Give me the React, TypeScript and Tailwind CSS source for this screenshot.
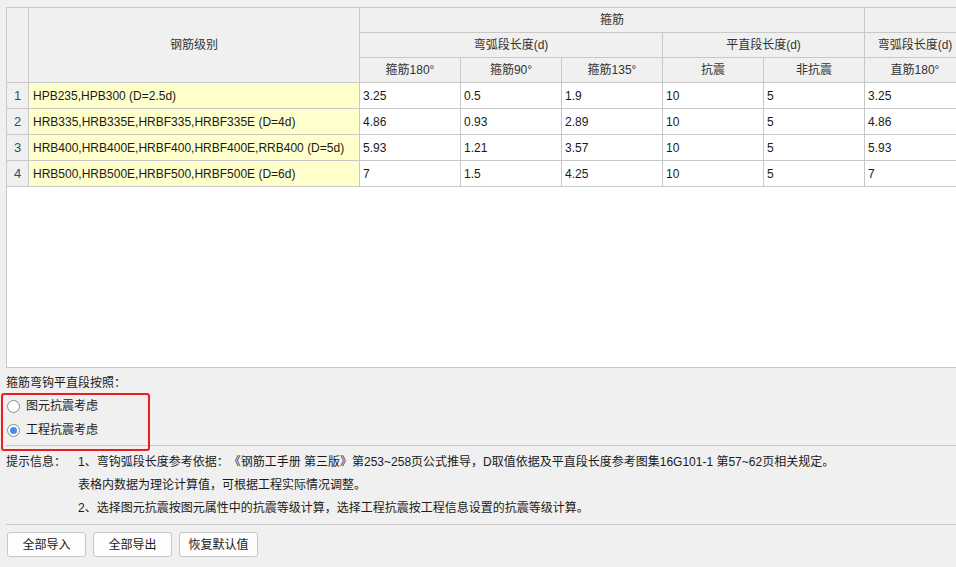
import React from "react";

const rows = [
  { n: 1, name: "HPB235,HPB300 (D=2.5d)", v: ["3.25", "0.5", "1.9", "10", "5", "3.25"] },
  { n: 2, name: "HRB335,HRB335E,HRBF335,HRBF335E (D=4d)", v: ["4.86", "0.93", "2.89", "10", "5", "4.86"] },
  { n: 3, name: "HRB400,HRB400E,HRBF400,HRBF400E,RRB400 (D=5d)", v: ["5.93", "1.21", "3.57", "10", "5", "5.93"] },
  { n: 4, name: "HRB500,HRB500E,HRBF500,HRBF500E (D=6d)", v: ["7", "1.5", "4.25", "10", "5", "7"] },
];

function H({ children, className = "" }: { children?: React.ReactNode; className?: string }) {
  return (
    <div className={"bg-[#f0f0f0] text-[#333] flex items-center justify-center whitespace-nowrap " + className}>
      {children}
    </div>
  );
}

function Radio({ checked, label }: { checked?: boolean; label: string }) {
  return (
    <div className="h-[24px] flex items-center">
      <div className="ml-[7px] w-[13px] h-[13px] rounded-full border border-[#8a8a8a] bg-white flex items-center justify-center">
        {checked && <div className="w-[7px] h-[7px] rounded-full bg-[#3f8ef0]" />}
      </div>
      <span className="ml-[6px] text-[#1a1a1a]">{label}</span>
    </div>
  );
}

export default function App() {
  return (
    <div className="relative w-[956px] h-[567px] overflow-hidden bg-[#f0f0f0] text-[12px] text-[#1a1a1a] font-['Liberation_Sans','Noto_Sans_CJK_SC',sans-serif] [text-spacing-trim:space-all]">
      <div className="pt-[7px] pl-[6px]">
        <div className="w-[1000px] h-[361px] border border-[#c8c8c8] bg-white overflow-hidden">
          <div className="w-max grid grid-cols-[21px_330px_100px_100px_100px_100px_100px_100px] grid-rows-[24px_24px_24px_25px_25px_25px_25px] gap-px bg-[#c8c8c8] border-b border-[#c8c8c8]">
            <H className="row-span-3" />
            <H className="row-span-3">钢筋级别</H>
            <H className="col-span-5">箍筋</H>
            <H />
            <H className="col-span-3">弯弧段长度(d)</H>
            <H className="col-span-2">平直段长度(d)</H>
            <H>弯弧段长度(d)</H>
            <H>箍筋180°</H>
            <H>箍筋90°</H>
            <H>箍筋135°</H>
            <H>抗震</H>
            <H>非抗震</H>
            <H>直筋180°</H>
            {rows.map((r) => (
              <React.Fragment key={r.n}>
                <div className="bg-[#f0f0f0] text-[#3b4a5a] flex items-center justify-center text-[13px]">{r.n}</div>
                <div className="bg-[#ffffcc] flex items-center pl-[4px] whitespace-nowrap">{r.name}</div>
                {r.v.map((v, i) => (
                  <div key={i} className="bg-white flex items-center pl-[3px]">
                    {v}
                  </div>
                ))}
              </React.Fragment>
            ))}
          </div>
        </div>
      </div>

      <div className="pl-[6px] mt-[7px] h-[16px] leading-[16px]">箍筋弯钩平直段按照：</div>
      <div className="mt-[3px]">
        <Radio label="图元抗震考虑" />
        <Radio checked label="工程抗震考虑" />
      </div>
      <div className="ml-[6px] mt-[3px] h-px bg-[#c8c8c8]" />

      <div className="pl-[6px] pt-[5px] flex">
        <div className="w-[72px] shrink-0 h-[23px] leading-[23px]">提示信息：</div>
        <div className="whitespace-nowrap">
          <div className="h-[23px] leading-[23px]">
            1、弯钩弧段长度参考依据：《钢筋工手册 第三版》第253~258页公式推导，D取值依据及平直段长度参考图集16G101-1 第57~62页相关规定。
          </div>
          <div className="h-[23px] leading-[23px]">表格内数据为理论计算值，可根据工程实际情况调整。</div>
          <div className="h-[23px] leading-[23px]">2、选择图元抗震按图元属性中的抗震等级计算，选择工程抗震按工程信息设置的抗震等级计算。</div>
        </div>
      </div>
      <div className="ml-[6px] mt-[4px] h-px bg-[#c8c8c8]" />

      <div className="pl-[7px] pt-[7px] flex gap-[7px]">
        {["全部导入", "全部导出", "恢复默认值"].map((b) => (
          <div
            key={b}
            className="w-[79px] h-[25px] border border-[#c6c6c6] rounded-[3px] bg-[#fdfdfd] flex items-center justify-center"
          >
            {b}
          </div>
        ))}
      </div>

      <div className="absolute left-[1px] top-[393px] w-[149px] h-[58px] border-2 border-[#f01c1c] rounded-[3px]" />
    </div>
  );
}
